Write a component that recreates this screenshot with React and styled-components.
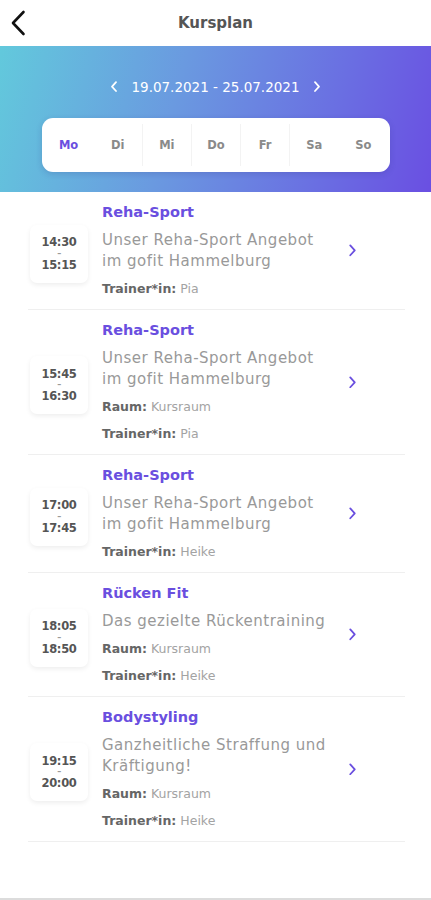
import React from 'react';
import styled, { createGlobalStyle } from 'styled-components';

const GlobalStyle = createGlobalStyle`
  body {
    margin: 0;
    background: #fff;
    font-family: "DejaVu Sans", "Open Sans", sans-serif;
  }
`;

const purple = '#6a4fdf';

const Page = styled.div`
  width: 431px;
  height: 900px;
  display: flex;
  flex-direction: column;
  background: #fff;
  overflow: hidden;
`;

const Header = styled.header`
  height: 46px;
  display: flex;
  align-items: center;
  justify-content: center;
  position: relative;
  flex-shrink: 0;
`;

const BackButton = styled.button`
  position: absolute;
  left: 6px;
  top: 9px;
  width: 24px;
  height: 28px;
  padding: 0;
  border: none;
  background: none;
  display: flex;
  align-items: center;
  justify-content: center;
`;

const HeaderTitle = styled.h1`
  margin: 0;
  font-size: 15px;
  font-weight: bold;
  color: #555;
`;

const Banner = styled.section`
  height: 146px;
  flex-shrink: 0;
  background: linear-gradient(105deg, #62c9dc 0%, #6a9ae0 40%, #6a6fe2 75%, #6a4fe2 100%);
  display: flex;
  flex-direction: column;
  align-items: center;
  box-sizing: border-box;
  padding-top: 30px;
`;

const WeekNav = styled.div`
  display: flex;
  align-items: center;
  gap: 13px;
  height: 22px;
  color: #fff;
  font-size: 13.5px;
`;

const NavArrow = styled.span`
  display: flex;
  align-items: center;
`;

const DayCard = styled.div`
  margin-top: 20px;
  width: 348px;
  height: 54px;
  background: #fff;
  border-radius: 11px;
  box-shadow: 0 2px 6px rgba(40, 40, 120, 0.18);
  display: grid;
  grid-template-columns: repeat(7, 1fr);
  padding: 0 2px;
  box-sizing: border-box;
`;

const Day = styled.div`
  display: flex;
  align-items: center;
  justify-content: center;
  font-size: 11.5px;
  font-weight: bold;
  color: ${({ active }) => (active ? purple : '#8a8a8a')};
  border-left: 1px solid ${({ divider }) => (divider ? '#f3f3f3' : 'transparent')};
  margin: 6px 0;
`;

const List = styled.ul`
  list-style: none;
  margin: 0 26px 0 28px;
  padding: 0;
`;

const Item = styled.li`
  display: flex;
  align-items: center;
  padding: 10px 0;
  border-bottom: 1px solid #efefef;
`;

const TimeBox = styled.div`
  width: 58px;
  height: 58px;
  flex-shrink: 0;
  margin-left: 2px;
  margin-top: 6px;
  border-radius: 7px;
  box-shadow: 0 2px 5px rgba(0, 0, 0, 0.07);
  display: flex;
  flex-direction: column;
  align-items: center;
  justify-content: center;
  font-size: 11.5px;
  font-weight: bold;
  color: #555;
  line-height: 12.5px;
  letter-spacing: -0.3px;
`;

const Dash = styled.span`
  font-size: 8px;
  color: #999;
  line-height: 10px;
`;

const Content = styled.div`
  flex: 1;
  margin-left: 14px;
  min-width: 0;
`;

const Title = styled.div`
  font-size: 14.5px;
  font-weight: bold;
  line-height: 20px;
  color: ${purple};
`;

const Description = styled.div`
  margin-top: 8px;
  font-size: 15px;
  line-height: 21px;
  letter-spacing: 0.5px;
  color: #999;
`;

const Meta = styled.div`
  margin-top: 7px;
  font-size: 12.5px;
  line-height: 20px;
  color: #a3a3a3;

  b {
    color: #666;
  }
`;

const ChevronCell = styled.div`
  width: 70px;
  flex-shrink: 0;
  display: flex;
  padding-left: 13px;
  box-sizing: border-box;
`;

const Footer = styled.div`
  margin-top: auto;
  height: 2px;
  background: #dcdcdc;
`;

const ChevronLeft = ({ size = 10, color = '#fff', width = 2.2 }) => (
  <svg width={size} height={size * 1.4} viewBox="0 0 10 14" fill="none">
    <path d="M7.5 1.5 L2.5 7 L7.5 12.5" stroke={color} strokeWidth={width} strokeLinecap="round" strokeLinejoin="round" />
  </svg>
);

const ChevronRight = ({ size = 10, color = '#fff', width = 2.2 }) => (
  <svg width={size} height={size * 1.4} viewBox="0 0 10 14" fill="none">
    <path d="M2.5 1.5 L7.5 7 L2.5 12.5" stroke={color} strokeWidth={width} strokeLinecap="round" strokeLinejoin="round" />
  </svg>
);

const days = ['Mo', 'Di', 'Mi', 'Do', 'Fr', 'Sa', 'So'];

const courses = [
  { title: 'Reha-Sport', from: '14:30', to: '15:15', desc: 'Unser Reha-Sport Angebot im gofit Hammelburg', trainer: 'Pia' },
  { title: 'Reha-Sport', from: '15:45', to: '16:30', desc: 'Unser Reha-Sport Angebot im gofit Hammelburg', room: 'Kursraum', trainer: 'Pia' },
  { title: 'Reha-Sport', from: '17:00', to: '17:45', desc: 'Unser Reha-Sport Angebot im gofit Hammelburg', trainer: 'Heike' },
  { title: 'Rücken Fit', from: '18:05', to: '18:50', desc: 'Das gezielte Rückentraining', room: 'Kursraum', trainer: 'Heike' },
  { title: 'Bodystyling', from: '19:15', to: '20:00', desc: 'Ganzheitliche Straffung und Kräftigung!', room: 'Kursraum', trainer: 'Heike' },
];

export default function App() {
  return (
    <>
      <GlobalStyle />
      <Page>
        <Header>
          <BackButton aria-label="Zurück">
            <svg width="16" height="26" viewBox="0 0 16 26" fill="none">
              <path d="M13.5 2 L3 13 L13.5 24" stroke="#111" strokeWidth="2.6" strokeLinecap="round" strokeLinejoin="round" />
            </svg>
          </BackButton>
          <HeaderTitle>Kursplan</HeaderTitle>
        </Header>

        <Banner>
          <WeekNav>
            <NavArrow><ChevronLeft size={8} /></NavArrow>
            <span>19.07.2021 - 25.07.2021</span>
            <NavArrow><ChevronRight size={8} /></NavArrow>
          </WeekNav>
          <DayCard>
            {days.map((d, i) => (
              <Day key={d} active={i === 0} divider={i > 1 && i < 6}>{d}</Day>
            ))}
          </DayCard>
        </Banner>

        <List>
          {courses.map((c, i) => (
            <Item key={i}>
              <TimeBox>
                <span>{c.from}</span>
                <Dash>–</Dash>
                <span>{c.to}</span>
              </TimeBox>
              <Content>
                <Title>{c.title}</Title>
                <Description>{c.desc}</Description>
                {c.room && <Meta><b>Raum:</b> {c.room}</Meta>}
                <Meta><b>Trainer*in:</b> {c.trainer}</Meta>
              </Content>
              <ChevronCell>
                <ChevronRight size={9} color={purple} width={2} />
              </ChevronCell>
            </Item>
          ))}
        </List>

        <Footer />
      </Page>
    </>
  );
}
